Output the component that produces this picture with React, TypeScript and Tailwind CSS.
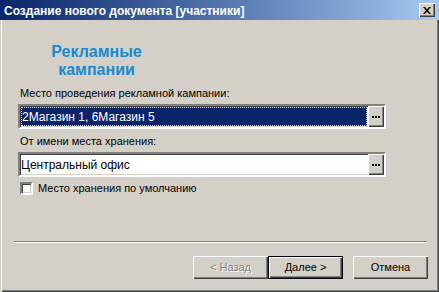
import React from "react";

const sunken =
  "border-2 border-t-[#808080] border-l-[#808080] border-b-white border-r-white shadow-[inset_1px_1px_0_#404040,inset_-1px_-1px_0_#d4d0c8]";
const raised =
  "bg-[#d4d0c8] shadow-[inset_1px_1px_0_#ffffff,inset_-1px_-1px_0_#404040,inset_-2px_-2px_0_#808080]";

function Dots() {
  return (
    <div className="flex gap-[1px]">
      <div className="w-[2px] h-[2px] bg-black" />
      <div className="w-[2px] h-[2px] bg-black" />
      <div className="w-[2px] h-[2px] bg-black" />
    </div>
  );
}

export default function App() {
  return (
    <div
      className="w-[439px] h-[292px] bg-[#d4d0c8] flex flex-col shadow-[inset_1px_0_0_#d4d0c8,inset_2px_0_0_#ffffff,inset_0_-1px_0_#404040,inset_0_-2px_0_#808080,inset_-1px_0_0_#404040,inset_-2px_0_0_#808080]"
      style={{ fontFamily: '"Liberation Sans", Arial, sans-serif' }}
    >
      {/* title bar */}
      <div className="h-[20px] flex items-center justify-between bg-gradient-to-r from-[#0a246a] to-[#a6caf0] pl-[4px] pr-[4px]">
        <span className="text-white font-bold text-[12px] leading-none pt-[1px]">
          Создание нового документа [участники]
        </span>
        <div className={`w-[16px] h-[14px] flex items-center justify-center ${raised}`}>
          <svg width="8" height="7" viewBox="0 0 8 7">
            <path d="M0 0h2l2 2.5L6 0h2L5 3.5 8 7H6L4 4.5 2 7H0l3-3.5z" fill="#000" />
          </svg>
        </div>
      </div>

      {/* heading */}
      <div className="w-[193px] mt-[23px] text-center text-[#1a8ad0] font-bold text-[16px] leading-[18px]">
        <div>Рекламные</div>
        <div>кампании</div>
      </div>

      <div className="pl-[18px] pr-[53px] flex flex-col">
        <div className="mt-[7px] h-[14px] text-[11px] leading-[14px] text-black pl-[2px]">
          Место проведения рекламной кампании:
        </div>
        <div className={`mt-[4px] h-[25px] flex bg-white ${sunken}`}>
          <div className="flex-1 m-[1px] bg-[#0a246a] border border-dotted border-[#e8d890] flex items-center text-white text-[12px]">
            2Магазин 1, 6Магазин 5
          </div>
          <div className={`w-[16px] flex items-center justify-center ${raised}`}>
            <Dots />
          </div>
        </div>

        <div className="mt-[5px] h-[14px] text-[11px] leading-[14px] text-black pl-[2px]">
          От имени места хранения:
        </div>
        <div className={`mt-[4px] h-[25px] flex bg-white ${sunken}`}>
          <div className="flex-1 flex items-center pl-[1px] text-black text-[12px]">
            Центральный офис
          </div>
          <div className={`w-[16px] flex items-center justify-center ${raised}`}>
            <Dots />
          </div>
        </div>

        <div className="mt-[4px] flex items-center h-[14px] pl-[2px]">
          <div className={`w-[13px] h-[13px] bg-white ${sunken}`} />
          <span className="ml-[5px] text-[11px] text-black leading-[14px]">
            Место хранения по умолчанию
          </span>
        </div>
      </div>

      <div className="flex-1" />

      <div className="mx-[14px] mr-[12px] h-[2px] border-t border-t-[#808080] border-b border-b-white" />

      <div className="flex justify-end pr-[11px] mt-[13px] mb-[13px]">
        <div className={`w-[75px] h-[23px] flex items-center justify-center text-[11px] text-[#808080] [text-shadow:1px_1px_0_#ffffff] ${raised}`}>
          &lt; Назад
        </div>
        <div className="w-[75px] h-[23px] border border-black">
          <div className={`w-full h-full flex items-center justify-center text-[11px] text-black ${raised}`}>
            Далее &gt;
          </div>
        </div>
        <div className={`ml-[10px] w-[75px] h-[23px] flex items-center justify-center text-[11px] text-black ${raised}`}>
          Отмена
        </div>
      </div>
    </div>
  );
}
